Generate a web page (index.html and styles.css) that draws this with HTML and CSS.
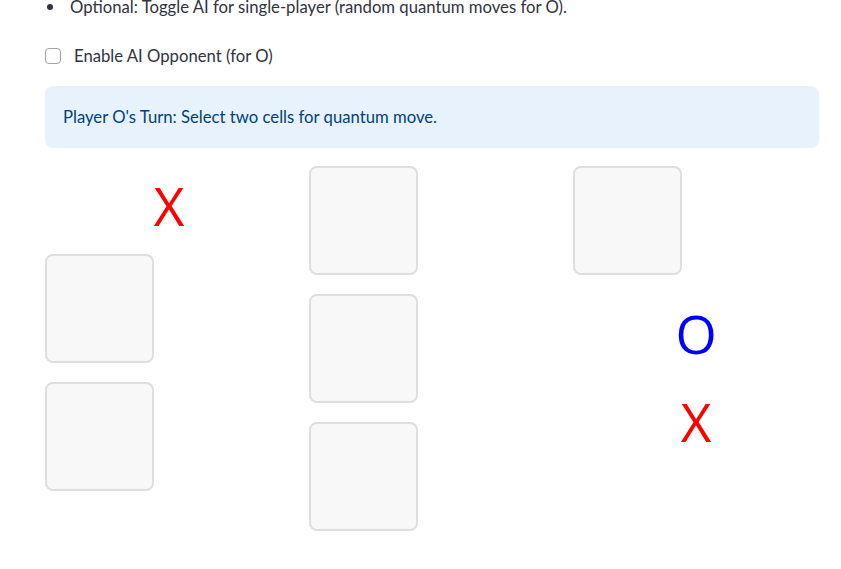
FILE: index.html
```html
<!DOCTYPE html>
<html>
<head>
<meta charset="utf-8">
<link rel="stylesheet" href="styles.css">
</head>
<body>
<div class="main">
  <ul class="notes">
    <li class="note"><span class="dot"></span><span>Optional: Toggle AI for single-player (random quantum moves for O).</span></li>
  </ul>
  <label class="check-row"><span class="box"></span><span class="check-label">Enable AI Opponent (for O)</span></label>
  <div class="info">Player O's Turn: Select two cells for quantum move.</div>
  <div class="board">
    <div class="col">
      <div class="mark x">X</div>
      <div class="cell-wrap"><button class="cell"></button></div>
      <div class="cell-wrap"><button class="cell"></button></div>
    </div>
    <div class="col">
      <div class="cell-wrap"><button class="cell"></button></div>
      <div class="cell-wrap"><button class="cell"></button></div>
      <div class="cell-wrap"><button class="cell"></button></div>
    </div>
    <div class="col">
      <div class="cell-wrap"><button class="cell"></button></div>
      <div class="mark o">O</div>
      <div class="mark x">X</div>
    </div>
  </div>
</div>
</body>
</html>
```
FILE: styles.css
```css
html, body {
  margin: 0;
  padding: 0;
  background: #ffffff;
}
body {
  font-family: "Source Sans Pro", "Lato", "Noto Sans", sans-serif;
  font-size: 16.7px;
  color: rgb(49, 51, 63);
  overflow: hidden;
}
.main {
  width: 774px;
  padding-left: 45px;
  margin-top: -5px;
}
.notes {
  list-style: none;
  margin: 0;
  padding: 0;
}
.note {
  display: flex;
  align-items: center;
  height: 24px;
  line-height: 24px;
}
.dot {
  width: 6px;
  height: 6px;
  border-radius: 50%;
  background: rgb(49, 51, 63);
  margin-left: 2px;
  margin-right: 17px;
}
.check-row {
  display: flex;
  align-items: center;
  height: 24px;
  margin-top: 25px;
}
.box {
  width: 14px;
  height: 14px;
  border: 1px solid #a3a3ab;
  border-radius: 4px;
  background: #fff;
  margin-right: 13px;
}
.check-label {
  line-height: 24px;
}
.info {
  margin-top: 18px;
  height: 62px;
  box-sizing: border-box;
  padding: 0 18px;
  display: flex;
  align-items: center;
  background: rgb(232, 242, 252);
  color: rgb(0, 66, 128);
  border-radius: 8px;
}
.board {
  margin-top: 18px;
  display: grid;
  grid-template-columns: 248px 248px 1fr;
  column-gap: 16px;
}
.col {
  display: flex;
  flex-direction: column;
  gap: 16px;
}
.cell-wrap {
  height: 112px;
}
.cell {
  display: block;
  width: 109px;
  height: 109px;
  box-sizing: border-box;
  border: 2px solid #dedede;
  border-radius: 8px;
  background: #f8f8f8;
  padding: 0;
}
.mark {
  height: 72px;
  box-sizing: border-box;
  padding-top: 4px;
  text-align: center;
  font-family: "Open Sans", sans-serif;
  font-size: 53px;
  line-height: 72px;
  overflow: visible;
}
.mark.x { color: #ff0000; }
.mark.o { color: #0000ff; }
```
